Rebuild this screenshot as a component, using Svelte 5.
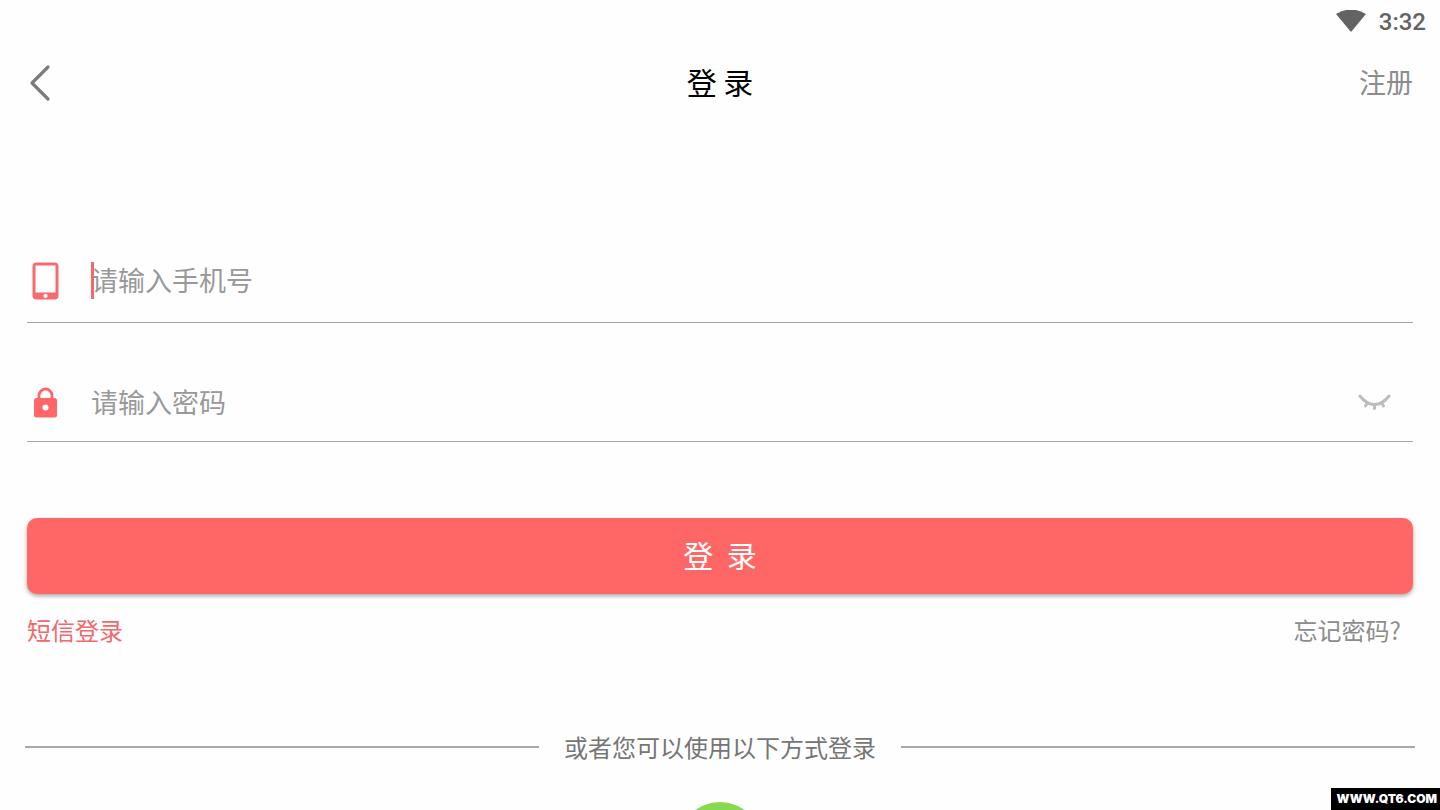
<script lang="ts">
  let phone = '';
  let password = '';
  let showPassword = false;
</script>

<svelte:head>
  <title>登录</title>
</svelte:head>

<main class="page">
  <div class="status-bar">
    <svg class="wifi" viewBox="0 0 30 24" aria-hidden="true">
      <path d="M0 4Q15 -5 30 4L15 22Z" fill="#636363" />
    </svg>
    <time>3:32</time>
  </div>

  <header class="top-bar">
    <button class="back" type="button" aria-label="返回">
      <svg viewBox="0 0 24 38" aria-hidden="true">
        <path d="M21 3L5 19L21 35" fill="none" stroke="#7b7b7b" stroke-width="3.200" stroke-linecap="round" stroke-linejoin="round" />
      </svg>
    </button>
    <h1>登 录</h1>
    <a class="register" href="#register">注册</a>
  </header>

  <form on:submit|preventDefault>
    <div class="field phone-field">
      <label for="phone" aria-label="手机号">
        <svg class="field-icon" viewBox="0 0 38 38" aria-hidden="true">
          <path
            fill="#f76b6e"
            fill-rule="evenodd"
            d="M9.500 0.500H27.500Q31.500 0.500 31.500 4.500V33.500Q31.500 37.500 27.500 37.500H9.500Q5.500 37.500 5.500 33.500V4.500Q5.500 0.500 9.500 0.500ZM8.500 3.500V30.500H28.500V3.500ZM18.500 31.800A2.100 2.100 0 1 0 18.500 36A2.100 2.100 0 1 0 18.500 31.800Z"
          />
        </svg>
      </label>
      <div class="input-wrap">
        <input id="phone" type="tel" placeholder="请输入手机号" bind:value={phone} />
        <span class="caret"></span>
      </div>
    </div>

    <div class="field password-field">
      <label for="password" aria-label="密码">
        <svg class="field-icon" viewBox="0 0 38 38" aria-hidden="true">
          <path d="M12 15.500V11.500A6.500 6.500 0 0 1 25 11.500V15.500" fill="none" stroke="#ff6667" stroke-width="2.800" />
          <path
            fill="#ff6667"
            fill-rule="evenodd"
            d="M9.500 14H27.500Q30 14 30 16.500V31Q30 33.500 27.500 33.500H9.500Q7 33.500 7 31V16.500Q7 14 9.500 14ZM18.500 20.500A3 3 0 1 0 18.500 26.500A3 3 0 1 0 18.500 20.500Z"
          />
        </svg>
      </label>
      <div class="input-wrap">
        <input id="password" type={showPassword ? 'text' : 'password'} placeholder="请输入密码" bind:value={password} />
      </div>
      <button class="eye" type="button" aria-label="显示密码" on:click={() => (showPassword = !showPassword)}>
        <svg viewBox="0 0 34 18" aria-hidden="true">
          <g fill="none" stroke="#bdbdbd" stroke-width="3" stroke-linecap="round">
            <path d="M2 2Q8.500 10.500 16.500 10.500Q24.500 10.500 31 2" />
            <path d="M9 9.500L7.500 12M16.500 11V14.500M24 9.500L25.500 12" />
          </g>
        </svg>
      </button>
    </div>

    <button class="submit" type="submit">登&nbsp;&nbsp;录</button>

    <div class="links">
      <a class="sms" href="#sms">短信登录</a>
      <a class="forgot" href="#forgot">忘记密码?</a>
    </div>
  </form>

  <div class="divider">或者您可以使用以下方式登录</div>

  <div class="providers">
    <button class="wechat" type="button" aria-label="微信登录"></button>
  </div>

  <div class="site-tag">WWW.QT6.COM</div>
</main>

<style>
  :global(body) {
    margin: 0;
    background: #fefefe;
  }

  .page {
    height: 100vh;
    overflow: hidden;
    font-family: 'Noto Sans CJK SC', sans-serif;
    color: #8c8c8c;
  }

  button,
  input {
    font-family: inherit;
    padding: 0;
    border: none;
    background: none;
  }

  button {
    cursor: pointer;
  }

  a {
    color: inherit;
    text-decoration: none;
  }

  svg {
    display: block;
  }

  .status-bar {
    display: flex;
    align-items: center;
    justify-content: flex-end;
    gap: 13px;
    height: 40px;
    padding: 2px 14px 0 0;
    font: 500 24px/40px Roboto, sans-serif;
    color: #636363;
  }

  .wifi {
    width: 30px;
    height: 24px;
  }

  .top-bar {
    display: grid;
    grid-template-columns: 1fr auto 1fr;
    align-items: center;
    height: 82px;
    padding: 0 27px;
  }

  .back {
    justify-self: start;
  }

  .back svg {
    width: 24px;
    height: 38px;
  }

  h1 {
    margin: 0;
    padding-bottom: 4px;
    font-size: 30px;
    font-weight: 400;
    line-height: 44px;
    color: #000;
  }

  .register {
    justify-self: end;
    padding-bottom: 2px;
    font-size: 27px;
    line-height: 40px;
  }

  form {
    padding: 116px 27px 0;
  }

  .field {
    display: flex;
    align-items: center;
    box-sizing: border-box;
    border-bottom: 1px solid #a5a5a5;
  }

  .phone-field {
    height: 83px;
  }

  .password-field {
    height: 77px;
    margin-top: 42px;
  }

  .field-icon {
    width: 38px;
    height: 38px;
  }

  .input-wrap {
    position: relative;
    flex: 1;
    margin-left: 26px;
  }

  input {
    display: block;
    box-sizing: border-box;
    width: 100%;
    height: 44px;
    padding-bottom: 4px;
    font-size: 27px;
    color: #333;
    outline: none;
  }

  input::placeholder {
    color: #999;
    opacity: 1;
  }

  .caret {
    position: absolute;
    top: 3px;
    left: 0;
    width: 3px;
    height: 37px;
    background: #f2686c;
  }

  .eye {
    margin-right: 21px;
  }

  .eye svg {
    width: 34px;
    height: 18px;
  }

  .submit {
    display: block;
    width: 100%;
    height: 76px;
    margin-top: 76px;
    padding-bottom: 4px;
    border-radius: 10px;
    background: #ff6666;
    box-shadow: 0 2px 4px rgba(0, 0, 0, 0.35);
    font-size: 30px;
    color: #fff;
  }

  .links {
    display: flex;
    justify-content: space-between;
    margin-top: 18px;
    padding-right: 12px;
    font-size: 24px;
    line-height: 36px;
  }

  .sms {
    color: #f2686a;
  }

  .divider {
    display: flex;
    align-items: center;
    gap: 25px;
    margin-top: 81px;
    padding: 0 25px;
    font-size: 24px;
    line-height: 36px;
    color: #757575;
  }

  .divider::before,
  .divider::after {
    content: '';
    flex: 1;
    height: 2px;
    background: #a8a8a8;
  }

  .providers {
    display: flex;
    justify-content: center;
    padding: 37px 0;
  }

  .wechat {
    width: 84px;
    height: 84px;
    border-radius: 50%;
    background: #87d94f;
  }

  .site-tag {
    position: fixed;
    right: 0;
    bottom: 0;
    padding: 0 3px 0 5px;
    background: #000;
    font: 900 12px/22px Inter, 'Liberation Sans', sans-serif;
    color: #fff;
  }
</style>
